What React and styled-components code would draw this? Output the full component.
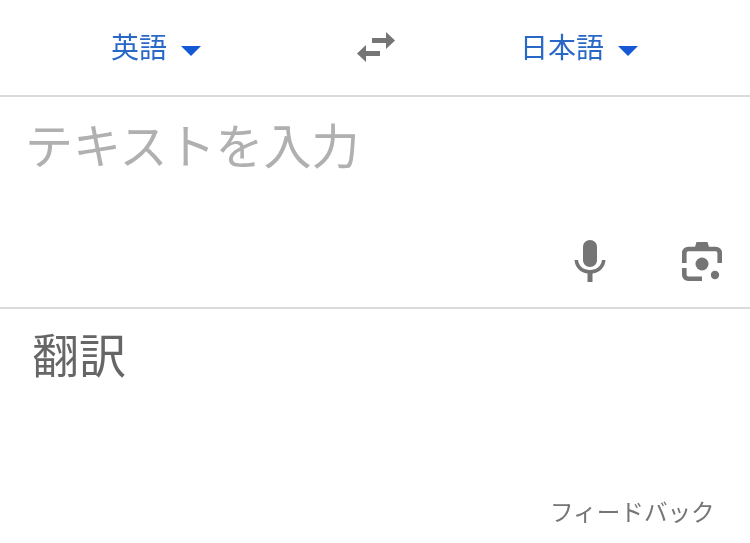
import React from "react";
import styled, { createGlobalStyle } from "styled-components";

const Global = createGlobalStyle`
  html, body { margin: 0; padding: 0; background: #fff; }
  body { font-family: "Noto Sans CJK JP", "Noto Sans", sans-serif; }
`;
const Page = styled.div`
  width: 750px; height: 543px; display: flex; flex-direction: column; overflow: hidden; background: #fff;
`;
const Header = styled.header`
  height: 95px; display: grid; grid-template-columns: 111px 91px 154px 40px 124px 116px 114px; align-items: center;
  border-bottom: 2px solid #dadada; flex: none;
`;
const LangButton = styled.div`
  grid-column: ${p => p.$col}; display: flex; align-items: center; gap: 14px; font-size: 28px; line-height: 40px; margin-top: -3px;
`;
const LangName = styled.span`
  color: #2a68c8; font-weight: 400; white-space: nowrap; will-change: transform;
`;
const Caret = styled.svg`
  width: 20px; height: 10px; flex: none; margin-top: 9px; fill: #1558d6;
`;
const SwapIcon = styled.svg`
  grid-column: 4; width: 40px; height: 32px; fill: #757575; margin-top: -1px;
`;
const InputPanel = styled.section`
  flex: none; height: 212px; box-sizing: border-box; display: flex; flex-direction: column; justify-content: space-between; border-bottom: 2px solid #dadada; padding: 16px 28px 24px 25px;
`;
const Placeholder = styled.div`
  font-size: 48px; line-height: 60px; color: #b0b0b0; font-weight: 400; white-space: nowrap; will-change: transform;
`;
const Tools = styled.div`
  display: flex; justify-content: flex-end; align-items: center; gap: 74px;
`;
const Mic = styled.svg`width: 34px; height: 44px; fill: #757575; margin-top: -3px;`;
const Lens = styled.svg`width: 42px; height: 42px; fill: none; margin-right: -1px; margin-top: -2px;`;
const OutputPanel = styled.section`
  flex: 1; display: flex; flex-direction: column; justify-content: space-between; padding: 14px 35px 15px 32px;
`;
const Result = styled.div`
  font-size: 47px; line-height: 60px; color: #666; font-weight: 400; will-change: transform;
`;
const Feedback = styled.div`
  align-self: flex-end; font-size: 23.6px; line-height: 34px; color: #757575; font-weight: 400; white-space: nowrap; will-change: transform;
`;

export default function App() {
  return (
    <Page>
      <Global />
      <Header>
        <LangButton $col={2}><LangName>英語</LangName><Caret viewBox="0 0 20 10"><path d="M0 0h20L10 10z" /></Caret></LangButton>
        <SwapIcon viewBox="0 0 40 32">
          <path d="M30 1l9 8.500-9 8.500v-6H16V7h14zM10 14v6h14v5H10v6L1 22.500z" />
        </SwapIcon>
        <LangButton $col={6}><LangName>日本語</LangName><Caret viewBox="0 0 20 10"><path d="M0 0h20L10 10z" /></Caret></LangButton>
      </Header>
      <InputPanel>
        <Placeholder>テキストを入力</Placeholder>
        <Tools>
          <Mic viewBox="0 0 34 44">
            <path d="M17 1c4 0 7 3 7 7v13c0 4-3 7-7 7s-7-3-7-7V8c0-4 3-7 7-7z" />
            <path d="M1.500 21h3.600c.4 6 5.400 10 11.900 10s11.500-4 11.900-10h3.600c-.4 7-5.500 12.500-13 13.500V43h-5v-8.500C7 33.500 1.900 28 1.500 21z" />
          </Mic>
          <Lens viewBox="0 0 42 42">
            <path d="M3.300 22V12c0-2.400 1.600-4 4-4h27.400c2.400 0 4 1.600 4 4v10" stroke="#757575" strokeWidth="4.600" />
            <path d="M14 6l1.500-5h11L28 6z" fill="#757575" />
            <circle cx="21" cy="23" r="6.500" fill="#757575" />
            <path d="M3.300 27v6.700c0 2.400 1.600 4 4 4H21" stroke="#757575" strokeWidth="4.600" />
            <circle cx="34" cy="34" r="4.200" fill="#757575" />
          </Lens>
        </Tools>
      </InputPanel>
      <OutputPanel>
        <Result>翻訳</Result>
        <Feedback>フィードバック</Feedback>
      </OutputPanel>
    </Page>
  );
}
